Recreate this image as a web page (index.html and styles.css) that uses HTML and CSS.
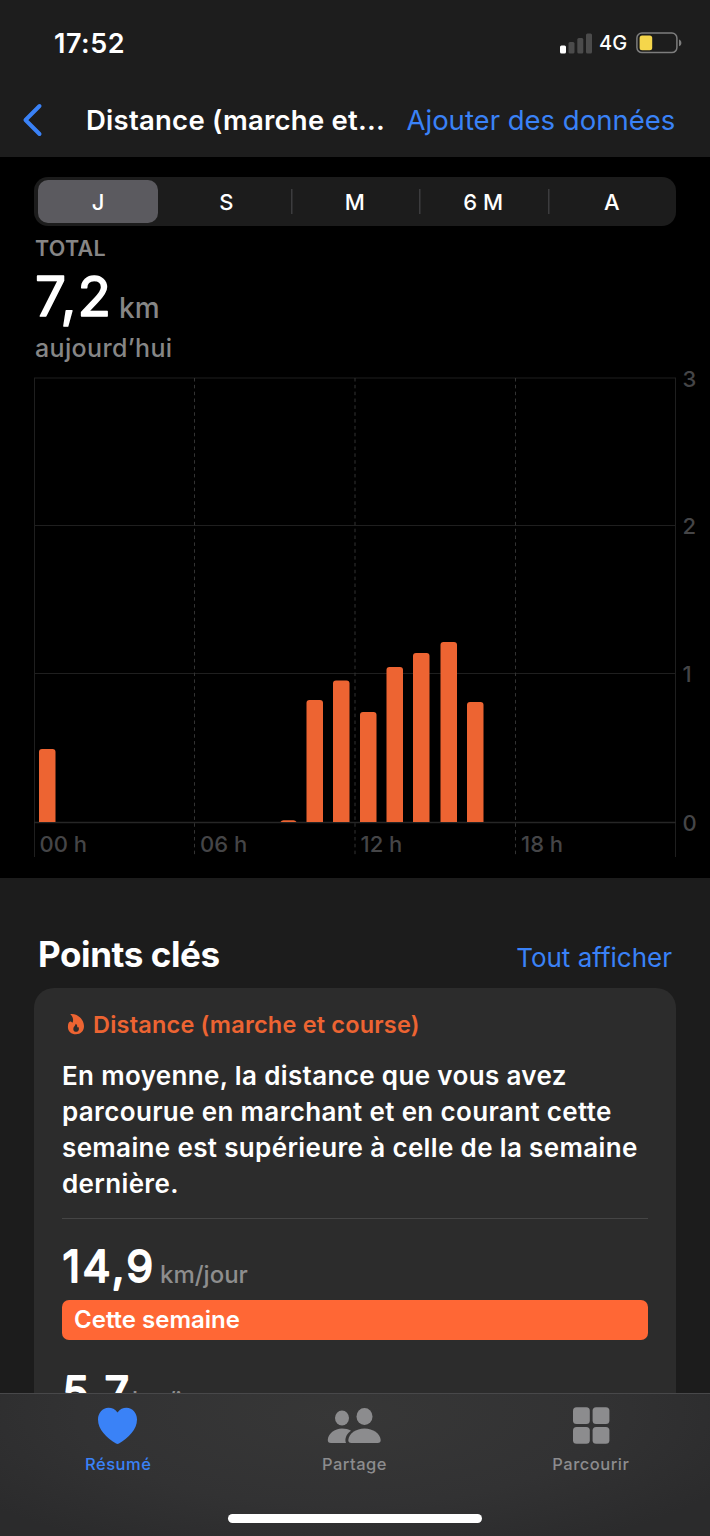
FILE: index.html
```html
<!DOCTYPE html>
<html lang="fr">
<head>
  <meta charset="UTF-8">
  <meta name="viewport" content="width=device-width, initial-scale=1.0">
  <title>Distance (marche et course)</title>
  <link rel="stylesheet" href="styles.css">
</head>
<body>
  <!-- Header -->
  <header class="header">
    <div class="status-bar">
      <span class="time">17:52</span>
      <div class="status-icons">
        <svg class="signal" width="33" height="21" viewBox="0 0 33 21">
          <rect x="0" y="12.5" width="6" height="8" rx="1.5" fill="#fff"/>
          <rect x="8.5" y="9" width="6" height="11.5" rx="1.5" fill="#4b4b4b"/>
          <rect x="17.3" y="5" width="6" height="15.5" rx="1.5" fill="#4b4b4b"/>
          <rect x="26" y="0.5" width="6" height="20" rx="1.5" fill="#4b4b4b"/>
        </svg>
        <span class="network">4G</span>
        <svg class="battery" width="46" height="22" viewBox="0 0 46 22">
          <rect x="0.9" y="1" width="40" height="19.6" rx="5" fill="none" stroke="#7d7d7d" stroke-width="1.5"/>
          <rect x="3.6" y="3.6" width="12.6" height="14.6" rx="2.5" fill="#f5d64b"/>
          <path d="M43 7.5c3.2 1.2 3.2 5.6 0 6.8z" fill="#7d7d7d"/>
        </svg>
      </div>
    </div>
    <nav class="nav">
      <svg class="back" width="22" height="34" viewBox="0 0 22 34">
        <path d="M17.5 3L3.5 17L17.5 31" fill="none" stroke="#3a82f7" stroke-width="4" stroke-linecap="round" stroke-linejoin="round"/>
      </svg>
      <h1 class="title">Distance (marche et...</h1>
      <a class="link add">Ajouter des données</a>
    </nav>
  </header>

  <main class="content">
    <!-- Chart -->
    <section class="chart-section">
      <div class="segments">
        <span class="segment active">J</span>
        <span class="segment">S</span>
        <span class="segment divided">M</span>
        <span class="segment divided">6 M</span>
        <span class="segment divided">A</span>
      </div>
      <div class="total-label">TOTAL</div>
      <div class="total">
        <svg class="number-total" width="80" height="60">
          <text x="1" y="42">7,2</text>
        </svg>
        <span class="unit">km</span>
      </div>
      <div class="period">aujourd’hui</div>
      <svg class="chart" width="710" height="492" viewBox="0 366 710 492">
        <g class="grid">
          <path d="M34 378H676M34 525.5H676M34 673.5H676"/>
          <path d="M34.5 378V857M675.5 378V857"/>
          <path class="axis" d="M34 822.5H676"/>
          <path class="dashed" d="M194.5 378V855M355 378V855M515.5 378V855"/>
        </g>
        <g class="bars">
          <path d="M39 822V752q0-3 3-3h10.500q3 0 3 3V822z"/>
          <path d="M280.500 822q1-1.700 3-1.700h10q2 0 3 1.700z"/>
          <path d="M306.500 822V703q0-3 3-3h10.500q3 0 3 3V822z"/>
          <path d="M333 822V683.500q0-3 3-3h10.500q3 0 3 3V822z"/>
          <path d="M360 822V715q0-3 3-3h10.500q3 0 3 3V822z"/>
          <path d="M386.500 822V670q0-3 3-3h10.500q3 0 3 3V822z"/>
          <path d="M413 822V656q0-3 3-3h10.500q3 0 3 3V822z"/>
          <path d="M440.500 822V645q0-3 3-3h10.500q3 0 3 3V822z"/>
          <path d="M467 822V705q0-3 3-3h10.500q3 0 3 3V822z"/>
        </g>
        <g class="labels">
          <text x="39.500" y="852">00 h</text>
          <text x="200" y="852">06 h</text>
          <text x="360.500" y="852">12 h</text>
          <text x="521" y="852">18 h</text>
          <text x="682.500" y="386.500">3</text>
          <text x="682.500" y="534">2</text>
          <text x="682.500" y="682">1</text>
          <text x="682.500" y="830.500">0</text>
        </g>
      </svg>
    </section>

    <!-- Highlights -->
    <section class="highlights">
      <div class="section-head">
        <h2>Points clés</h2>
        <a class="link">Tout afficher</a>
      </div>
      <article class="card">
        <div class="card-title">
          <svg width="18" height="22" viewBox="0 0 18 22">
            <path fill="#ed6432" fill-rule="evenodd" d="M3.200 0C10.500 -0.900 17 5.300 17 12.300C17 17.100 13.500 20.300 9 20.300C4.200 20.300 0.900 17.300 0.900 12.900C0.900 9.800 1.900 7.500 3.400 7.500C4.300 7.500 4.600 8.200 5.400 8.700C6.900 6.200 6 2.500 3.200 0zM8.600 9.700C9 11.600 6.300 12.400 6.300 14.900C6.300 16.700 7.400 17.800 9 17.800C10.600 17.800 11.900 16.700 11.900 14.900C11.900 13.800 11.600 12.900 11 12.900C10.600 12.900 10.500 13.200 10.100 13.400C10.500 11.700 10 10.400 8.600 9.700z"/>
          </svg>
          <span>Distance (marche et course)</span>
        </div>
        <p class="summary">En moyenne, la distance que vous avez<br>parcourue en marchant et en courant cette<br>semaine est supérieure à celle de la semaine<br>dernière.</p>
        <div class="metric">
          <svg class="number" width="96" height="50">
            <text x="0.500" y="37">14,9</text>
          </svg>
          <span class="per-day">km/jour</span>
        </div>
        <div class="week-bar">Cette semaine</div>
        <div class="metric previous">
          <svg class="number" width="68" height="50">
            <text x="0.500" y="37">5,7</text>
          </svg>
          <span class="per-day">km/jour</span>
        </div>
      </article>
    </section>
  </main>

  <!-- Tab bar -->
  <footer class="footer">
    <div class="tabs">
      <a class="tab active">
        <svg width="54" height="38" viewBox="0 0 54 38">
          <path fill="currentColor" d="M26.500 5.500C29 2 32 0.800 35.500 0.800C41.500 0.800 46 6 46 12.500C46 22.500 37.500 30.500 28 36.500Q26.500 37.400 25 36.500C15.500 30.500 7 22.500 7 12.500C7 6 11.500 0.800 17.500 0.800C21 0.800 24 2 26.500 5.500z"/>
        </svg>
        <span>Résumé</span>
      </a>
      <a class="tab">
        <svg width="54" height="38" viewBox="0 0 54 38">
          <g fill="currentColor">
            <ellipse cx="15" cy="11" rx="7" ry="7.600"/>
            <ellipse cx="37.500" cy="9.500" rx="8" ry="8.500"/>
            <path d="M4 36Q0.500 36 0.800 32.500C1.500 26.500 7.500 21.500 15 21.500C18.500 21.500 21.500 22.300 24 23.800C20.500 26 18 30 18.500 34.500L19 36z"/>
            <path d="M24.500 36Q21.100 36 21.300 33C21.800 26.500 29 21.500 37.500 21.500C46 21.500 53.200 26.500 53.700 33Q53.900 36 50.500 36z"/>
          </g>
        </svg>
        <span>Partage</span>
      </a>
      <a class="tab">
        <svg width="54" height="38" viewBox="0 0 54 38">
          <g fill="currentColor">
            <rect x="9" y="0.300" width="16.800" height="16.800" rx="3.500"/>
            <rect x="28.600" y="0.300" width="16.800" height="16.800" rx="3.500"/>
            <rect x="9" y="19.900" width="16.800" height="16.800" rx="3.500"/>
            <rect x="28.600" y="19.900" width="16.800" height="16.800" rx="3.500"/>
          </g>
        </svg>
        <span>Parcourir</span>
      </a>
    </div>
    <div class="home-indicator"></div>
  </footer>
</body>
</html>
```

FILE: styles.css
```css
* {
  box-sizing: border-box;
}

body {
  margin: 0;
  height: 1536px;
  display: flex;
  flex-direction: column;
  overflow: hidden;
  background: #1c1c1c;
  color: #fff;
  font-family: Inter, "Liberation Sans", sans-serif;
  font-optical-sizing: none;
}

h1, h2, p {
  margin: 0;
}

svg {
  display: block;
  flex: none;
  overflow: visible;
}

.link {
  color: #3a82f7;
}

/* Header */
.header {
  height: 157px;
  flex: none;
  background: #1d1d1d;
}

.status-bar {
  height: 83px;
  padding: 3px 28px 0 54px;
  display: flex;
  align-items: center;
  justify-content: space-between;
}

.time {
  font-size: 27px;
  font-weight: 600;
  letter-spacing: 0.5px;
}

.status-icons {
  display: flex;
  align-items: center;
}

.network {
  width: 43px;
  padding-left: 6px;
  font-size: 20px;
  font-weight: 500;
}

.nav {
  height: 74px;
  padding-left: 22px;
  display: flex;
  align-items: center;
}

.title {
  width: 320.5px;
  margin-left: 42px;
  font-size: 27.5px;
  font-weight: 600;
  letter-spacing: 0.25px;
  white-space: nowrap;
}

.add {
  font-size: 27.5px;
  white-space: nowrap;
}

/* Main content */
.content {
  flex: 1;
  min-height: 0;
  overflow: hidden;
}

.chart-section {
  height: 721px;
  padding-top: 20px;
  background: #000;
}

.segments {
  width: 642px;
  height: 49px;
  margin-left: 34px;
  padding: 3px 0;
  display: flex;
  border-radius: 14px;
  background: #1c1c1c;
}

.segment {
  flex: 1;
  display: flex;
  align-items: center;
  justify-content: center;
  font-size: 22px;
  font-weight: 500;
}

.segment.active {
  flex: none;
  width: 120px;
  margin: 0 4px;
  border-radius: 10px;
  background: #5b5a5f;
}

.segment.divided {
  background: linear-gradient(#3c3c3e, #3c3c3e) left center / 1.5px 25px no-repeat;
}

.total-label {
  height: 45px;
  padding-left: 35px;
  font-size: 21.5px;
  font-weight: 600;
  line-height: 45px;
  letter-spacing: 0.3px;
  color: #868686;
}

.total {
  height: 62px;
  padding-left: 34px;
  display: flex;
}

.number-total,
.number {
  fill: #fff;
  stroke: #fff;
  stroke-linejoin: round;
}

.number-total {
  margin-top: 3px;
  font-size: 55px;
  font-weight: 400;
  stroke-width: 1.5px;
  letter-spacing: 1.2px;
}

.number {
  font-size: 43.5px;
  font-weight: 400;
  stroke-width: 1.8px;
  letter-spacing: 2.4px;
}

.unit {
  margin-left: 5px;
  font-size: 28px;
  font-weight: 500;
  line-height: 74px;
  color: #868686;
}

.period {
  height: 33px;
  padding-left: 35px;
  font-size: 25px;
  font-weight: 500;
  line-height: 31px;
  letter-spacing: 0.35px;
  color: #868686;
}

/* Chart drawing */
.grid path {
  fill: none;
  stroke: #1f1f1f;
  stroke-width: 1;
}

.grid .axis {
  stroke: #262626;
  stroke-width: 1.5;
}

.grid .dashed {
  stroke: #333;
  stroke-dasharray: 3.5 3.35;
}

.bars path {
  fill: #ed6432;
}

.labels text {
  fill: #454547;
  font-size: 22px;
  font-weight: 500;
}

/* Highlights */
.highlights {
  padding: 58px 34px 0;
}

.section-head {
  height: 52px;
  padding: 0 4px;
  display: flex;
  align-items: baseline;
  justify-content: space-between;
}

.section-head h2 {
  font-size: 35px;
  font-weight: 700;
  line-height: 36px;
  letter-spacing: -0.4px;
}

.section-head .link {
  font-size: 26px;
}

.card {
  height: 520px;
  padding: 20px 28px;
  border-radius: 20px;
  background: #2c2c2c;
}

.card-title {
  height: 33px;
  padding-left: 5px;
  display: flex;
  align-items: center;
  gap: 8px;
  font-size: 23.5px;
  font-weight: 600;
  letter-spacing: 0.2px;
  color: #ed6432;
}

.summary {
  height: 178px;
  padding-top: 17px;
  border-bottom: 1px solid #454545;
  font-size: 26px;
  font-weight: 600;
  line-height: 36px;
  letter-spacing: 0.35px;
  white-space: nowrap;
}

.metric {
  height: 81px;
  padding-top: 26px;
  display: flex;
}

.per-day {
  margin-left: 2px;
  font-size: 24px;
  font-weight: 500;
  line-height: 60px;
  color: #8e8e8e;
}

.week-bar {
  width: 586px;
  height: 40px;
  padding-left: 12px;
  border-radius: 7px;
  background: #ff6735;
  font-size: 24px;
  font-weight: 600;
  line-height: 40px;
}

.previous {
  padding-top: 31px;
}

/* Tab bar */
.footer {
  height: 143px;
  flex: none;
  border-top: 1px solid #48484a;
  background: radial-gradient(ellipse 440px 150px at 48% 15%, #373737, #323233 60%, #2b2b2c);
}

.tabs {
  width: 709px;
  height: 120px;
  padding-top: 13px;
  display: flex;
}

.tab {
  flex: 1;
  display: flex;
  flex-direction: column;
  align-items: center;
  color: #8c8c8e;
  font-size: 16.5px;
  font-weight: 500;
  line-height: 39px;
  letter-spacing: 0.5px;
}

.tab.active {
  color: #3a82f7;
}

.home-indicator {
  width: 254px;
  height: 9px;
  margin: 0 auto;
  border-radius: 5px;
  background: #fff;
}
```
